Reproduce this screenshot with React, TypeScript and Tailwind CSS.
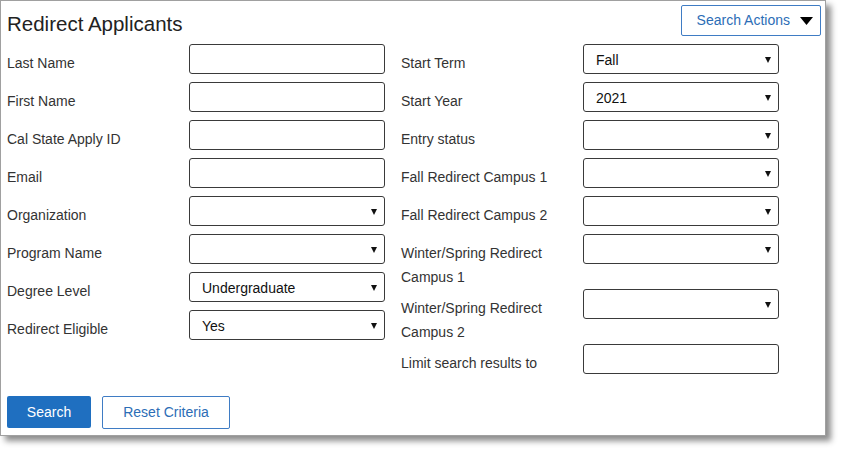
import React from 'react';

type Field = { label: string; kind: 'input' | 'select'; value?: string };

const leftFields: Field[] = [
  { label: 'Last Name', kind: 'input' },
  { label: 'First Name', kind: 'input' },
  { label: 'Cal State Apply ID', kind: 'input' },
  { label: 'Email', kind: 'input' },
  { label: 'Organization', kind: 'select' },
  { label: 'Program Name', kind: 'select' },
  { label: 'Degree Level', kind: 'select', value: 'Undergraduate' },
  { label: 'Redirect Eligible', kind: 'select', value: 'Yes' },
];

const rightFields: Field[] = [
  { label: 'Start Term', kind: 'select', value: 'Fall' },
  { label: 'Start Year', kind: 'select', value: '2021' },
  { label: 'Entry status', kind: 'select' },
  { label: 'Fall Redirect Campus 1', kind: 'select' },
  { label: 'Fall Redirect Campus 2', kind: 'select' },
  { label: 'Winter/Spring Redirect Campus 1', kind: 'select' },
  { label: 'Winter/Spring Redirect Campus 2', kind: 'select' },
  { label: 'Limit search results to', kind: 'input' },
];

const Control = ({ field }: { field: Field }) => {
  if (field.kind === 'input') {
    return <div className="w-[196px] h-[30px] mb-2 shrink-0 border border-[#3a3a3a] rounded-[3px] bg-white" />;
  }
  return (
    <div className="w-[196px] h-[30px] mb-2 shrink-0 border border-[#3a3a3a] rounded-[3px] bg-white flex items-center justify-between pl-[12px] pr-[7px] text-[14px] text-[#111]">
      <span className="mt-[2px]">{field.value ?? ''}</span>
      <svg width="6" height="6" viewBox="0 0 6 6" className="mt-[1px]">
        <polygon points="0,0 6,0 3,6" fill="#111" />
      </svg>
    </div>
  );
};

const Column = ({ fields }: { fields: Field[] }) => (
  <div className="flex flex-col w-[378px]">
    {fields.map((f) => (
      <div key={f.label} className="flex items-start">
        <div className="w-[182px] shrink-0 pt-[7px] leading-6 text-[14px] text-[#333] pr-2">{f.label}</div>
        <Control field={f} />
      </div>
    ))}
  </div>
);

export default function App() {
  return (
    <div className="w-[841px] h-[451px] bg-white" style={{ fontFamily: '"Liberation Sans", Arial, sans-serif' }}>
      <div className="w-[826px] h-[436px] border border-[#a0a0a0] bg-white shadow-[5px_5px_6px_rgba(0,0,0,0.45)] pl-[6px] pr-[4px] pt-[4px]">
        <div className="flex justify-between items-start h-[39px]">
          <h1 className="mt-[7px] text-[20.5px] leading-6 text-[#222]">Redirect Applicants</h1>
          <button className="h-[31px] w-[140px] border border-[#3f7cc4] rounded-[2px] bg-white flex items-center justify-end gap-[10px] pr-[7px] text-[14px] text-[#2c6db6]">
            <span>Search Actions</span>
            <svg width="13" height="8" viewBox="0 0 13 8">
              <polygon points="0,0 13,0 6.5,8" fill="#000" />
            </svg>
          </button>
        </div>
        <div className="flex gap-[16px]">
          <Column fields={leftFields} />
          <Column fields={rightFields} />
        </div>
        <div className="flex gap-[11px] mt-[14px]">
          <button className="h-[32px] w-[84px] bg-[#1f6fc0] rounded-[2px] text-white text-[14px]">Search</button>
          <button className="h-[33px] w-[128px] border border-[#3f7cc4] rounded-[2px] bg-white text-[#2c6db6] text-[14px]">Reset Criteria</button>
        </div>
      </div>
    </div>
  );
}
